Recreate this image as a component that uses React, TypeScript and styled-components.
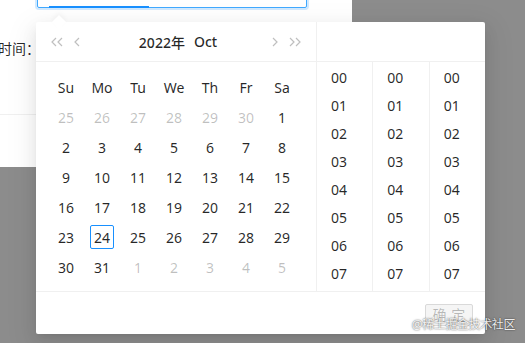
import React from "react";
import styled, { createGlobalStyle } from "styled-components";

const Global = createGlobalStyle`
  html, body { margin: 0; padding: 0; }
  body {
    background: #8c8c8c;
    font-family: "Noto Sans", "Noto Sans CJK SC", sans-serif;
    font-size: 14px;
    color: rgba(0,0,0,.85);
    overflow: hidden;
  }
`;

const Stage = styled.div`
  position: relative;
  width: 525px;
  height: 343px;
  overflow: hidden;
`;

const Dialog = styled.div`
  width: 352px;
  height: 191px;
  margin-top: -24px;
  background: #fff;
  display: flex;
  flex-direction: column;
`;

const FormRow = styled.div<{ $top?: number }>`
  display: flex;
  align-items: center;
  height: 32px;
  margin-top: ${(p) => p.$top ?? 0}px;
`;

const Label = styled.div<{ $w: number }>`
  width: ${(p) => p.$w}px;
  flex-shrink: 0;
  display: flex;
  justify-content: flex-end;
  white-space: nowrap;
  font-size: 14px;
  color: rgba(0,0,0,.85);
`;

const Input = styled.div`
  position: relative;
  margin-left: 6px;
  width: 270px;
  height: 32px;
  box-sizing: border-box;
  border: 1px solid #40a9ff;
  border-radius: 2px;
  box-shadow: 0 0 0 2px rgba(24,144,255,.2);
`;

const ActiveBar = styled.div`
  position: absolute;
  left: 11px;
  bottom: -1px;
  width: 100px;
  height: 2px;
  background: #1890ff;
`;

const DialogFooter = styled.div`
  margin-top: 50px;
  border-top: 1px solid #f0f0f0;
  flex: 1;
`;

const Popup = styled.div`
  position: absolute;
  left: 36px;
  top: 22px;
  width: 449px;
  height: 312px;
  background: #fff;
  border-radius: 2px;
  box-shadow: 0 3px 6px -4px rgba(0,0,0,.12), 0 6px 16px 0 rgba(0,0,0,.08), 0 9px 28px 8px rgba(0,0,0,.05);
  display: flex;
  flex-direction: column;
`;

const Arrow = styled.div`
  position: absolute;
  left: 18px;
  top: -5px;
  width: 10px;
  height: 10px;
  background: #fff;
  transform: rotate(45deg);
  box-shadow: -2px -2px 5px rgba(0,0,0,.04);
`;

const Panels = styled.div`
  display: flex;
  height: 269px;
`;

const DatePanel = styled.div`
  width: 281px;
  display: flex;
  flex-direction: column;
`;

const Header = styled.div`
  height: 40px;
  box-sizing: border-box;
  border-bottom: 1px solid #f0f0f0;
  display: flex;
  align-items: center;
  padding: 0 11px 0 11px;
`;

const NavBtn = styled.span`
  width: 20px;
  display: flex;
  justify-content: center;
  align-items: center;
`;

const HeaderView = styled.div`
  flex: 1;
  display: flex;
  justify-content: center;
  gap: 9px;
  font-weight: 500;
  font-size: 14px;
  color: rgba(0,0,0,.85);
  padding-left: 4px;
`;

const Body = styled.div`
  padding: 10px 12px 9px;
  display: grid;
  grid-template-columns: repeat(7, 36px);
  grid-auto-rows: 30px;
`;

const Cell = styled.div<{ $muted?: boolean }>`
  display: flex;
  align-items: center;
  justify-content: center;
  font-size: 14px;
  color: ${(p) => (p.$muted ? "rgba(0,0,0,.25)" : "rgba(0,0,0,.85)")};
`;

const Today = styled.span`
  width: 24px;
  height: 24px;
  box-sizing: border-box;
  border: 1px solid #1890ff;
  border-radius: 2px;
  display: flex;
  align-items: center;
  justify-content: center;
`;

const TimePanel = styled.div`
  width: 168px;
  border-left: 1px solid #f0f0f0;
  display: flex;
  flex-direction: column;
`;

const TimeHeader = styled.div`
  height: 40px;
  box-sizing: border-box;
  border-bottom: 1px solid #f0f0f0;
`;

const Columns = styled.div`
  flex: 1;
  display: flex;
  overflow: hidden;
`;

const Column = styled.div`
  width: 56px;
  padding-top: 2px;
  & + & { border-left: 1px solid #f0f0f0; }
  display: flex;
  flex-direction: column;
`;

const TimeCell = styled.div`
  height: 28px;
  line-height: 28px;
  padding-left: 14px;
  font-size: 14px;
  color: rgba(0,0,0,.85);
  flex-shrink: 0;
`;

const Footer = styled.div`
  flex: 1;
  border-top: 1px solid #f0f0f0;
  display: flex;
  justify-content: flex-end;
  align-items: center;
  padding: 0 12px;
`;

const OkButton = styled.button`
  height: 22px;
  width: 48px;
  padding: 0;
  font-family: inherit;
  font-size: 14px;
  line-height: 20px;
  color: rgba(0,0,0,.25);
  background: #f5f5f5;
  border: 1px solid #d9d9d9;
  border-radius: 2px;
  margin-top: 3px;
  letter-spacing: 0.34em;
  & > span { margin-right: -0.34em; }
`;

const Watermark = styled.div`
  position: absolute;
  right: 10px;
  bottom: 10px;
  font-size: 12px;
  color: rgba(255,255,255,.92);
  text-shadow: 0 0 2px rgba(0,0,0,.5), 0 0 1px rgba(0,0,0,.4);
  white-space: nowrap;
  letter-spacing: -0.4px;
`;

const Chevron = ({ double, dir }: { double?: boolean; dir: "l" | "r" }) => {
  const one = (x: number) =>
    dir === "l"
      ? `M${x + 5} 1 L${x + 1} 5 L${x + 5} 9`
      : `M${x + 1} 1 L${x + 5} 5 L${x + 1} 9`;
  return (
    <svg width={double ? 12 : 7} height="10" viewBox={`0 0 ${double ? 12 : 7} 10`}>
      <path d={one(0) + (double ? " " + one(6) : "")} fill="none" stroke="#bfbfbf" strokeWidth="1.2" />
    </svg>
  );
};

const weekdays = ["Su", "Mo", "Tu", "We", "Th", "Fr", "Sa"];
const days: { d: number; m?: boolean }[] = [
  ...[25, 26, 27, 28, 29, 30].map((d) => ({ d, m: true })),
  ...Array.from({ length: 31 }, (_, i) => ({ d: i + 1 })),
  ...[1, 2, 3, 4, 5].map((d) => ({ d, m: true })),
];
const times = ["00", "01", "02", "03", "04", "05", "06", "07", "08", "09"];

export default function App() {
  return (
    <Stage>
      <Global />
      <Dialog>
        <FormRow>
          <Label $w={31} />
          <Input>
            <ActiveBar />
          </Input>
        </FormRow>
        <FormRow $top={24}>
          <Label $w={40}>结束时间：</Label>
        </FormRow>
        <DialogFooter />
      </Dialog>
      <Popup>
        <Arrow />
        <Panels>
          <DatePanel>
            <Header>
              <NavBtn><Chevron double dir="l" /></NavBtn>
              <NavBtn><Chevron dir="l" /></NavBtn>
              <HeaderView>
                <span>2022年</span>
                <span>Oct</span>
              </HeaderView>
              <NavBtn><Chevron dir="r" /></NavBtn>
              <NavBtn><Chevron double dir="r" /></NavBtn>
            </Header>
            <Body>
              {weekdays.map((w) => (
                <Cell key={w}>{w}</Cell>
              ))}
              {days.map((c, i) => (
                <Cell key={i} $muted={c.m}>
                  {!c.m && c.d === 24 ? <Today>{c.d}</Today> : c.d}
                </Cell>
              ))}
            </Body>
          </DatePanel>
          <TimePanel>
            <TimeHeader />
            <Columns>
              {[0, 1, 2].map((k) => (
                <Column key={k}>
                  {times.map((t) => (
                    <TimeCell key={t}>{t}</TimeCell>
                  ))}
                </Column>
              ))}
            </Columns>
          </TimePanel>
        </Panels>
        <Footer>
          <OkButton disabled><span>确定</span></OkButton>
        </Footer>
      </Popup>
      <Watermark>@稀土掘金技术社区</Watermark>
    </Stage>
  );
}
